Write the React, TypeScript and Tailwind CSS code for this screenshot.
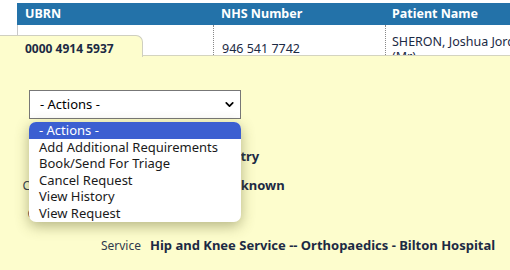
import { ChevronDown } from "lucide-react";

const actions = [
  "- Actions -",
  "Add Additional Requirements",
  "Book/Send For Triage",
  "Cancel Request",
  "View History",
  "View Request",
];

const details = [
  { label: "Referral Route", value: "Referral Registry", gap: "mt-[29px]" },
  { label: "Clinician Responsible", value: "Clinician is Unknown", gap: "mt-[12px]" },
  { label: "Clinical Terminology", value: "", gap: "mt-[11px]" },
  {
    label: "Service",
    value: "Hip and Knee Service -- Orthopaedics - Bilton Hospital",
    gap: "mt-[15px]",
  },
];

export default function App() {
  return (
    <div
      className="w-[510px] h-[270px] overflow-hidden bg-white text-[12px] text-[#1c2a44]"
      style={{ fontFamily: '"Noto Sans", "Open Sans", sans-serif' }}
    >
      <div className="pt-[3px] pl-[17px]">
        <div className="flex h-[22px] bg-[#2372a9] text-white font-bold text-[12.5px] items-center">
          <div className="w-[196px] shrink-0 pl-[8px]">UBRN</div>
          <div className="w-[172px] shrink-0 pl-[8px]">NHS Number</div>
          <div className="flex-1 pl-[7px]">Patient Name</div>
        </div>
        <div className="flex h-[40px] border-l border-[#c8c8c8] text-[12.5px] leading-[15px]">
          <div className="w-[195px] shrink-0" />
          <div className="w-[172px] shrink-0 border-l border-dotted border-[#888] pl-[8px] pt-[16px]">
            946 541 7742
          </div>
          <div className="flex-1 min-w-0 overflow-hidden border-l border-dotted border-[#888] pl-[6px] pt-[9px] whitespace-nowrap">
            SHERON, Joshua Jordan
            <br />
            (Mr)
          </div>
        </div>
      </div>

      <div className="relative -mt-[10px] h-[240px] bg-[#fdfdcd] border-t border-[#d4d4c0]">
        <div className="absolute left-0 -top-[21px] w-[143px] h-[22px] bg-[#fdfdcd] border-t border-r border-[#cfcfc0] rounded-tr-[7px] pl-[25px] pt-[4px] font-bold">
          0000 4914 5937
        </div>

        <div className="pt-[34px] pl-[29px]">
          <div className="w-[212px] h-[29px] bg-white border border-[#777] flex items-center justify-between pl-[10px] pr-[4px] text-[13px] text-black">
            <span>- Actions -</span>
            <ChevronDown size={13} strokeWidth={3.2} />
          </div>
        </div>

        <div className="flex flex-col">
          {details.map((d) => (
            <div key={d.label} className={`${d.gap} flex items-center h-[17px] whitespace-nowrap`}>
              <div className="w-[141px] shrink-0 text-right text-[#2f3a4d]">{d.label}</div>
              <div className="pl-[9px] font-bold text-[13px]">{d.value}</div>
            </div>
          ))}
        </div>

        <div className="absolute left-[29px] top-[66px] w-[212px] h-[100px] bg-white rounded-[7px] shadow-[0_4px_14px_rgba(90,90,40,0.45)] overflow-hidden text-[13px] text-[#1a1a1a] leading-[16.6px]">
          {actions.map((a, i) => (
            <div key={a} className={i === 0 ? "pl-[10px] bg-[#3c5fd1] text-white" : "pl-[10px]"}>
              {a}
            </div>
          ))}
        </div>
      </div>
    </div>
  );
}
